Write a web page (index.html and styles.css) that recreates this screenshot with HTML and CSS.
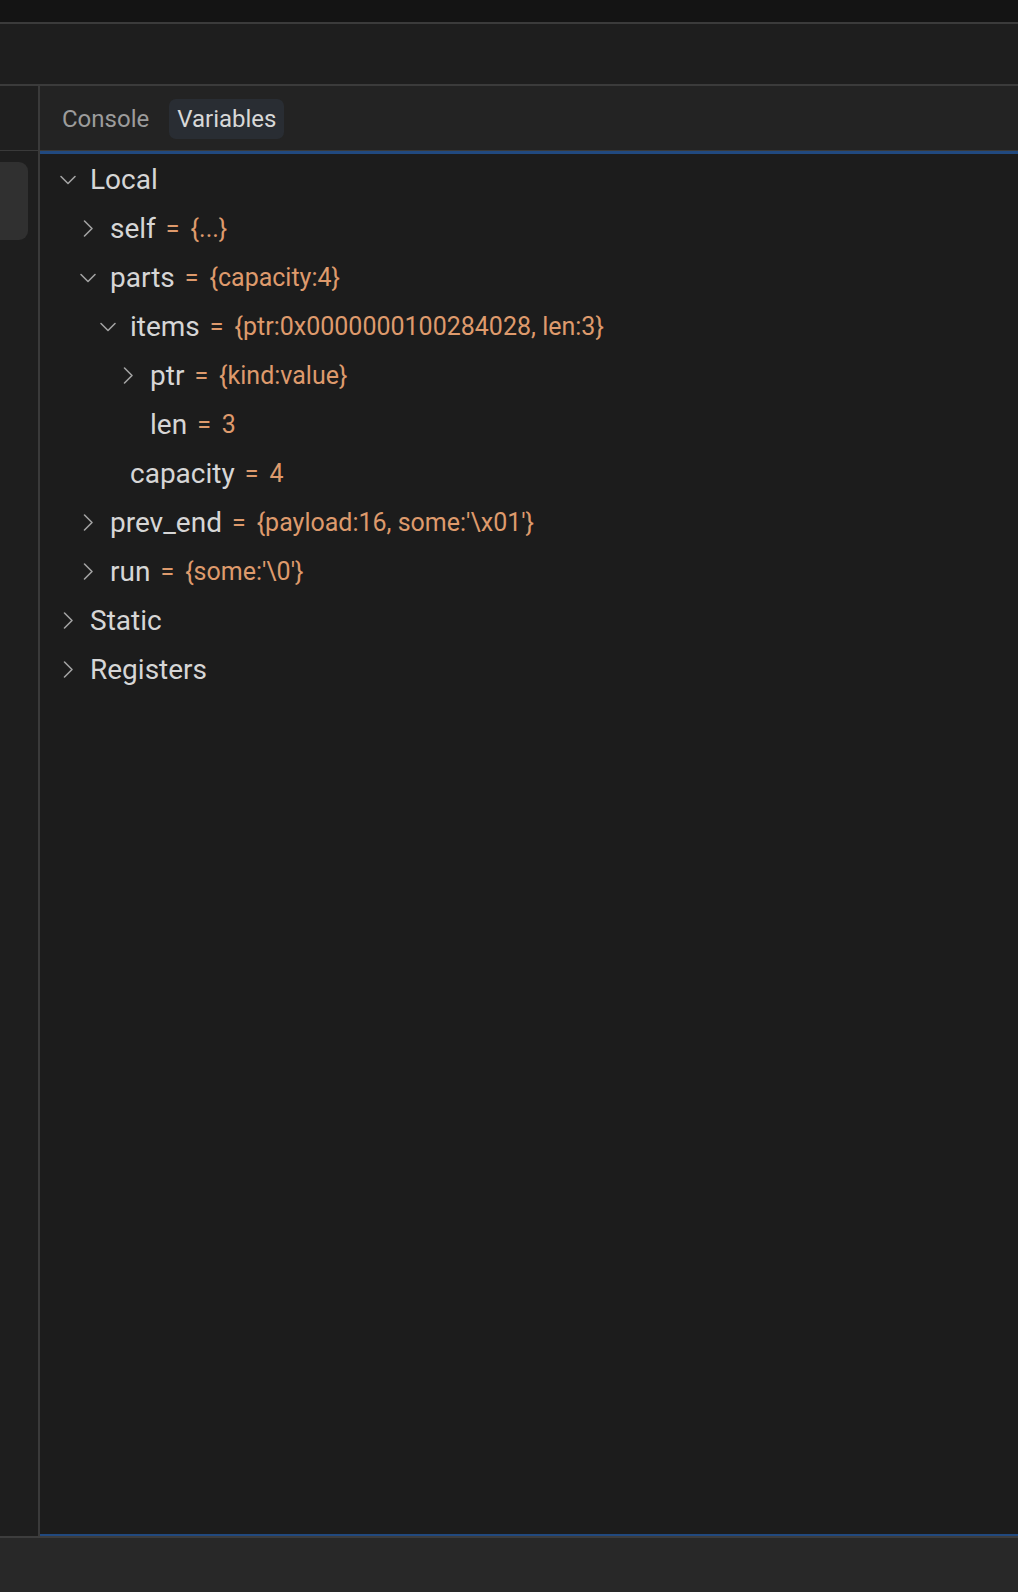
FILE: index.html
```html
<!DOCTYPE html>
<html lang="en">
<head>
  <meta charset="UTF-8">
  <meta name="viewport" content="width=device-width, initial-scale=1.0">
  <title>Variables</title>
  <link rel="stylesheet" href="styles.css">
</head>

<body>
  <div class="titlebar"></div>
  <div class="toolbar"></div>

  <div class="main">
    <div class="sidebar">
      <div class="sidebar-head"></div>
      <div class="sidebar-item"></div>
    </div>

    <div class="panel">
      <div class="tabs">
        <span class="tab">Console</span>
        <span class="tab active">Variables</span>
      </div>

      <ul class="tree">
        <li class="row lv0">
          <svg class="chev" viewBox="0 0 20 20"><path d="M3 6.5 L10 13.5 L17 6.5"/></svg>
          <span class="name">Local</span>
        </li>
        <li class="row lv1">
          <svg class="chev" viewBox="0 0 20 20"><path d="M6.5 2 L14 9.5 L6.5 17"/></svg>
          <span class="name">self</span><span class="eq">=</span><span class="val">{...}</span>
        </li>
        <li class="row lv1">
          <svg class="chev" viewBox="0 0 20 20"><path d="M3 6.5 L10 13.5 L17 6.5"/></svg>
          <span class="name">parts</span><span class="eq">=</span><span class="val">{capacity:4}</span>
        </li>
        <li class="row lv2">
          <svg class="chev" viewBox="0 0 20 20"><path d="M3 6.5 L10 13.5 L17 6.5"/></svg>
          <span class="name">items</span><span class="eq">=</span><span class="val">{ptr:0x0000000100284028, len:3}</span>
        </li>
        <li class="row lv3">
          <svg class="chev" viewBox="0 0 20 20"><path d="M6.5 2 L14 9.5 L6.5 17"/></svg>
          <span class="name">ptr</span><span class="eq">=</span><span class="val">{kind:value}</span>
        </li>
        <li class="row lv3">
          <span class="chev"></span>
          <span class="name">len</span><span class="eq">=</span><span class="val">3</span>
        </li>
        <li class="row lv2">
          <span class="chev"></span>
          <span class="name">capacity</span><span class="eq">=</span><span class="val">4</span>
        </li>
        <li class="row lv1">
          <svg class="chev" viewBox="0 0 20 20"><path d="M6.5 2 L14 9.5 L6.5 17"/></svg>
          <span class="name">prev_end</span><span class="eq">=</span><span class="val">{payload:16, some:'\x01'}</span>
        </li>
        <li class="row lv1">
          <svg class="chev" viewBox="0 0 20 20"><path d="M6.5 2 L14 9.5 L6.5 17"/></svg>
          <span class="name">run</span><span class="eq">=</span><span class="val">{some:'\0'}</span>
        </li>
        <li class="row lv0">
          <svg class="chev" viewBox="0 0 20 20"><path d="M6.5 2 L14 9.5 L6.5 17"/></svg>
          <span class="name">Static</span>
        </li>
        <li class="row lv0">
          <svg class="chev" viewBox="0 0 20 20"><path d="M6.5 2 L14 9.5 L6.5 17"/></svg>
          <span class="name">Registers</span>
        </li>
      </ul>
    </div>
  </div>

  <div class="statusbar"></div>
</body>
</html>
```

FILE: styles.css
```css
*{
  margin: 0;
  padding: 0;
  box-sizing: border-box;
}
html, body{
  height: 100%;
}
body{
  display: flex;
  flex-direction: column;
  background: #1c1c1c;
  font-family: Roboto, "Noto Sans", sans-serif;
  overflow: hidden;
}
li{
  list-style: none;
}
.titlebar{
  height: 24px;
  background: #141414;
  border-bottom: 2px solid #3b3b3b;
}
.toolbar{
  height: 62px;
  background: #1e1e1e;
  border-bottom: 2px solid #3b3b3b;
}
.main{
  flex: 1;
  display: flex;
  min-height: 0;
}
.sidebar{
  width: 40px;
  background: #1e1e1e;
  border-right: 2px solid #3a3a3a;
  overflow: hidden;
}
.sidebar-head{
  height: 65px;
  background: #1f1f1f;
  border-bottom: 1px solid #3a3a3a;
}
.sidebar-item{
  margin-top: 11px;
  margin-left: -12px;
  width: 40px;
  height: 78px;
  background: #303030;
  border-radius: 9px;
}
.panel{
  flex: 1;
  display: flex;
  flex-direction: column;
}
.tabs{
  height: 65px;
  background: #232323;
  border-bottom: 1px solid #3a3a3a;
  display: flex;
  align-items: center;
  padding: 2px 0 0 14px;
  gap: 12px;
}
.tab{
  font-size: 24px;
  color: #9c9c9c;
  padding: 0 8px;
  height: 40px;
  line-height: 40px;
  border-radius: 7px;
}
.tab.active{
  background: #292d33;
  color: #d8d8d8;
}
.tree{
  flex: 1;
  padding-top: 1px;
  border-top: 3px solid #21497f;
  border-bottom: 2px solid #21497f;
}
.row{
  height: 49px;
  display: flex;
  align-items: center;
  white-space: nowrap;
}
.lv0{ padding-left: 18px; }
.lv1{ padding-left: 38px; }
.lv2{ padding-left: 58px; }
.lv3{ padding-left: 78px; }
.chev{
  width: 20px;
  height: 20px;
  margin-right: 12px;
  flex: none;
  display: block;
}
.chev path{
  fill: none;
  stroke: #a2a2a2;
  stroke-width: 1.6;
  stroke-linecap: round;
  stroke-linejoin: round;
}
.name{
  font-size: 28px;
  color: #d6d6d6;
}
.eq{
  font-size: 25px;
  color: #de9a6c;
  margin: 0 11px 0 10px;
}
.val{
  font-size: 25px;
  color: #de9a6c;
}
.statusbar{
  height: 56px;
  background: #282828;
  border-top: 2px solid #3d3d3d;
}
```
